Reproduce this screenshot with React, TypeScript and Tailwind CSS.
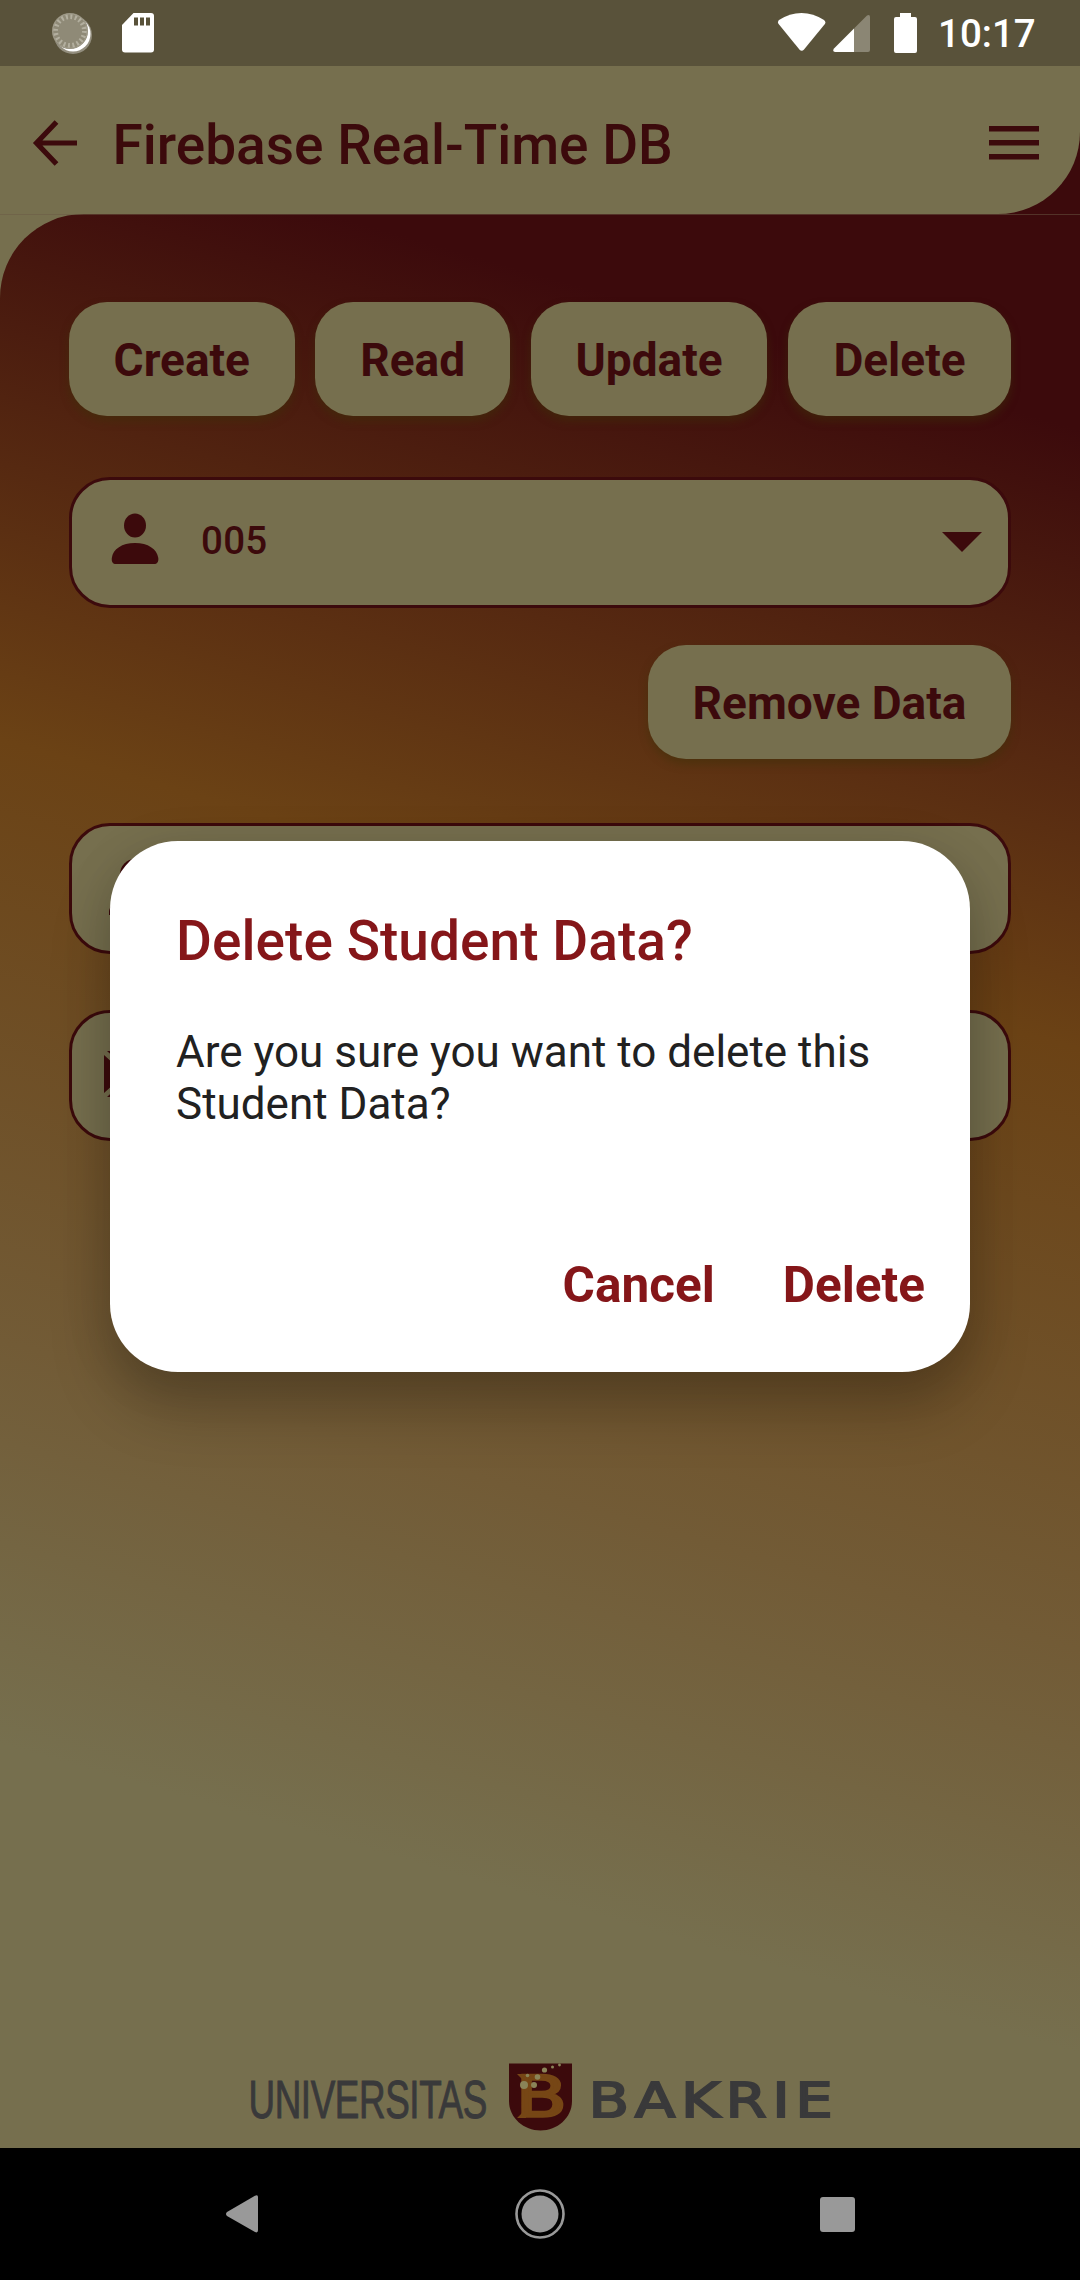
import React from "react";

function StatusBar() {
  return (
    <div className="flex h-[66px] shrink-0 items-center bg-[#59523a] text-white">
      <svg className="ml-[50px] h-[46px] w-[44px]" viewBox="50 10 44 46">
        <circle cx="73" cy="35" r="19" fill="#fff" fillOpacity="0.35" />
        <circle cx="73" cy="34" r="17.5" fill="#fff" />
        <circle cx="70" cy="31" r="18" fill="#8f8a77" />
        <circle cx="70" cy="31" r="14.5" fill="none" stroke="#b3af9f" strokeWidth="5" strokeDasharray="2 2.55" />
        <circle cx="70" cy="31" r="17.2" fill="none" stroke="#a19c8b" strokeWidth="1" />
      </svg>
      <svg className="ml-[27px] h-[42px] w-[34px]" viewBox="121 12 34 42">
        <path d="M133.500 13H151a3 3 0 0 1 3 3V49.500a3 3 0 0 1-3 3H125a3 3 0 0 1-3-3V25z" fill="#fff" />
        <path d="M134 17.500h4v8h-4zM140 17.500h4v8h-4zM146 17.500h4v8h-4z" fill="#59523a" />
      </svg>
      <svg className="ml-auto h-[42px] w-[50px]" viewBox="777 12 50 42">
        <path d="M779 24.500Q777 22 779 20C793 10.500 810 10.500 824 20Q826.500 22 824.500 24.500L804 49.500Q801.700 52 799.400 49.500z" fill="#fff" />
      </svg>
      <svg className="ml-[5px] h-[42px] w-[40px]" viewBox="832 12 40 42">
        <path d="M867 15.500Q870 14 870 17V50Q870 52 868 52H854V28.500z" fill="#8b8674" />
        <path d="M854 28.500V52H835Q832 51.500 834 48.500z" fill="#fff" />
      </svg>
      <svg className="ml-[21px] h-[42px] w-[26px]" viewBox="893 12 26 42">
        <path d="M900 13h11v4h4a2 2 0 0 1 2 2v32a2 2 0 0 1-2 2h-19a2 2 0 0 1-2-2V19a2 2 0 0 1 2-2h4z" fill="#fff" />
      </svg>
      <span className="mt-[3px] mr-[43px] ml-[19px] w-[99px] text-[38.500px] leading-none font-medium">10:17</span>
    </div>
  );
}

function PillButton({ label, className }: { label: string; className: string }) {
  return (
    <button
      className={
        "h-[114px] rounded-[38px] bg-[#766f4e] pt-[3px] text-center text-[46px] font-bold text-[#3c0a0c] shadow-[0_5px_9px_rgba(62,50,8,0.5)] " +
        className
      }
    >
      {label}
    </button>
  );
}

function PersonIcon() {
  return (
    <svg className="h-[54px] w-[50px]" viewBox="0 0 50 54" fill="#3c0a0c">
      <ellipse cx="25" cy="13.500" rx="11" ry="12" />
      <path d="M1.800 46C3 37 12 31 25 31s22 6 23.300 15c.400 4-1.300 6-4.300 6H6c-3 0-4.600-2-4.200-6z" />
    </svg>
  );
}

const fieldClass =
  "flex h-[131px] items-center rounded-[41px] border-[3px] border-[#3c0a0c] bg-[#766f4e]";

function Logo() {
  return (
    <svg className="h-[74px] w-[590px]" viewBox="245 2060 590 74">
      <g transform="translate(248.500 2118) scale(0.682 1)">
        <text x="0" y="0" fontFamily="Liberation Sans" fontSize="54" textLength="350" lengthAdjust="spacing" fill="#39393a" stroke="#39393a" strokeWidth="1">
          UNIVERSITAS
        </text>
      </g>
      <path d="M509 2063.500H572V2101C572 2118 557 2130.500 540.500 2130.500S509 2118 509 2101z" fill="#3c0a0c" />
      <g transform="translate(515.500 2116.500) scale(1.320 1)">
        <text x="0" y="0" fontFamily="DejaVu Sans" fontSize="57" fill="#764615" stroke="#764615" strokeWidth="2.4">
          B
        </text>
      </g>
      <path d="M517 2074h9v5h-4zM517 2118h9v-5h-4z" fill="#764615" />
      <g fill="#8a8458">
        <circle cx="524" cy="2085" r="4" />
        <circle cx="534" cy="2085" r="3" />
        <circle cx="527.500" cy="2075.500" r="1.800" />
        <circle cx="537.500" cy="2077" r="2.800" />
        <circle cx="544.500" cy="2070" r="2.600" />
        <circle cx="552.500" cy="2067" r="1.500" />
        <circle cx="559.500" cy="2065" r="1.400" />
      </g>
      <g transform="translate(588.500 2116.500) scale(1.250 1)">
        <text x="0" y="0" fontFamily="DejaVu Sans" fontSize="47.5" textLength="195.500" lengthAdjust="spacing" fill="#39393a" stroke="#39393a" strokeWidth="1.900">
          BAKRIE
        </text>
      </g>
    </svg>
  );
}

function ConfirmDialog() {
  return (
    <div className="absolute top-[841px] left-[110px] flex h-[531px] w-[860px] flex-col rounded-[68px] bg-white shadow-[0_36px_60px_rgba(0,0,0,0.22),0_8px_50px_rgba(0,0,0,0.1)]">
      <h2 className="mt-[68px] ml-[66px] text-[55px] leading-[64px] font-medium tracking-[0.050px] whitespace-nowrap text-[#851619]">
        Delete Student Data?
      </h2>
      <p className="mt-[53px] ml-[66px] text-[44px] leading-[52px] text-[#212121]">
        Are you sure you want to delete this
        <br />
        Student Data?
      </p>
      <div className="mt-[123px] mr-[45px] flex justify-end gap-[68px] text-[49.500px] leading-[64px] font-bold text-[#851619]">
        <button>Cancel</button>
        <button>Delete</button>
      </div>
    </div>
  );
}

export default function App() {
  return (
    <div className="relative flex h-[2280px] w-[1080px] flex-col overflow-hidden bg-[#766f4e] font-['Roboto',sans-serif]">
      <StatusBar />
      <div className="h-[148px] shrink-0 bg-[#3c0a0c]">
        <header className="flex h-full items-center rounded-br-[82px] bg-[#766f4e] text-[#3c0a0c]">
          <svg className="mt-[5px] ml-[32px] h-[48px] w-[46px]" viewBox="0 0 46 48" fill="none" stroke="#3c0a0c" strokeWidth="5.200">
            <path d="M45 24H5M24.500 3L4.500 24L24.500 45" />
          </svg>
          <h1 className="mt-[10px] ml-[34.500px] text-[55px] leading-[64px] font-medium whitespace-nowrap">Firebase Real-Time DB</h1>
          <svg className="mt-[6px] mr-[41px] ml-auto h-[36px] w-[50px]" viewBox="0 0 50 36" fill="#3c0a0c">
            <path d="M0 1h50v5.500H0zM0 15h50v5.500H0zM0 29h50v5.500H0z" />
          </svg>
        </header>
      </div>
      <div className="relative z-10 -mb-px h-px shrink-0 bg-[#6a5a44]/50" />
      <main className="flex h-[1934px] shrink-0 flex-col rounded-tl-[84px] bg-[linear-gradient(196deg,#3c0a0c_0%,#3c0a0c_9.600%,#6b4215_37.200%,#725b36_64%,#766f4e_82%)] px-[69px]">
        <nav className="mt-[88px] flex justify-between">
          <PillButton label="Create" className="w-[225.500px]" />
          <PillButton label="Read" className="w-[195px]" />
          <PillButton label="Update" className="w-[236.500px]" />
          <PillButton label="Delete" className="w-[223px]" />
        </nav>
        <div className={fieldClass + " mt-[61px]"}>
          <span className="-mt-[2px] ml-[38px] h-[60px]"><PersonIcon /></span>
          <span className="-mt-[3px] ml-[41px] text-[38.500px] leading-none font-medium tracking-[0.300px] text-[#3c0a0c]">005</span>
          <svg className="-mt-[2px] mr-[25px] ml-auto h-[22px] w-[42px]" viewBox="0 0 42 22">
            <path d="M1 1h40L21 21z" fill="#3c0a0c" />
          </svg>
        </div>
        <div className="mt-[37px] flex justify-end">
          <PillButton label="Remove Data" className="w-[363px]" />
        </div>
        <div className={fieldClass + " mt-[64px]"}>
          <svg className="ml-[37px] h-[60px] w-[56px]" viewBox="0 0 56 60" fill="#3c0a0c">
            <circle cx="26" cy="15" r="15" />
            <path d="M0 52C2 42 14 36 28 36s26 6 28 16v4H0z" />
          </svg>
        </div>
        <div className={fieldClass + " mt-[56px]"}>
          <svg className="-mt-[4px] ml-[32px] h-[48px] w-[62px]" viewBox="0 0 62 48" fill="#3c0a0c">
            <path d="M0 5L21 24L0 43zM3 1L31 26L59 1zM3 47L24 27L31 32L38 27L59 47zM62 5L41 24L62 43z" />
          </svg>
        </div>
        <footer className="mt-auto mb-[14px] flex justify-center"><Logo /></footer>
      </main>
      <div className="flex flex-1 items-center bg-black">
        <svg className="ml-[224px] h-[40px] w-[36px]" viewBox="224 2194 36 40">
          <path d="M254.500 2196Q258 2194 258 2197V2230Q258 2233.500 255 2232L227 2216Q225 2214 227 2212z" fill="#999" />
        </svg>
        <svg className="ml-[254px] h-[52px] w-[52px]" viewBox="-26 -26 52 52">
          <circle r="23.500" fill="none" stroke="#999" strokeWidth="2.600" />
          <circle r="18.500" fill="#999" />
        </svg>
        <div className="ml-[254px] h-[35px] w-[35px] rounded-[3px] bg-[#999]" />
      </div>
      <ConfirmDialog />
    </div>
  );
}
